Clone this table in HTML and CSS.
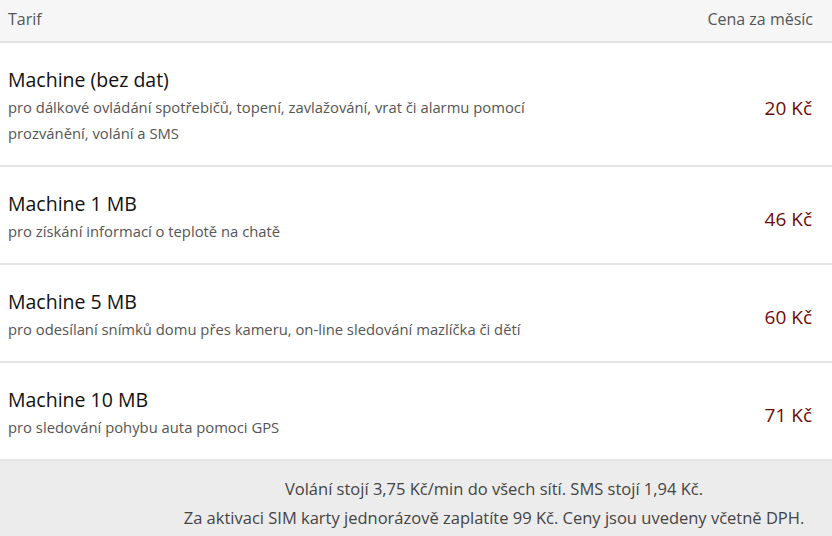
FILE: index.html
```html
<!DOCTYPE html>
<html lang="cs">
<head>
<meta charset="utf-8">
<link rel="stylesheet" href="styles.css">
</head>
<body>
<div class="table">
  <div class="head">
    <span>Tarif</span>
    <span>Cena za měsíc</span>
  </div>
  <div class="row">
    <div class="info">
      <div class="title">Machine (bez dat)</div>
      <div class="desc">pro dálkové ovládání spotřebičů, topení, zavlažování, vrat či alarmu pomocí<br>prozvánění, volání a SMS</div>
    </div>
    <div class="price">20 Kč</div>
  </div>
  <div class="row">
    <div class="info">
      <div class="title">Machine 1 MB</div>
      <div class="desc">pro získání informací o teplotě na chatě</div>
    </div>
    <div class="price">46 Kč</div>
  </div>
  <div class="row">
    <div class="info">
      <div class="title">Machine 5 MB</div>
      <div class="desc">pro odesílaní snímků domu přes kameru, on-line sledování mazlíčka či dětí</div>
    </div>
    <div class="price">60 Kč</div>
  </div>
  <div class="row">
    <div class="info">
      <div class="title">Machine 10 MB</div>
      <div class="desc">pro sledování pohybu auta pomoci GPS</div>
    </div>
    <div class="price">71 Kč</div>
  </div>
  <div class="foot">
    <p>Volání stojí 3,75 Kč/min do všech sítí. SMS stojí 1,94 Kč.</p>
    <p>Za aktivaci SIM karty jednorázově zaplatíte 99 Kč. Ceny jsou uvedeny včetně DPH.</p>
  </div>
</div>
</body>
</html>
```

FILE: styles.css
```css
* { box-sizing: border-box; }
html, body { margin: 0; padding: 0; background: #fff; }
body { font-family: "Open Sans", "Noto Sans", sans-serif; color: #111; width: 832px; height: 536px; overflow: hidden; }
.table { display: flex; flex-direction: column; }
.head {
  display: flex; justify-content: space-between; align-items: center;
  height: 43px; padding: 0 19px 3px 8px;
  background: #f6f6f6; border-bottom: 2px solid #e2e2e2;
  font-size: 16px; color: #555;
}
.row {
  display: flex; justify-content: space-between; align-items: center;
  padding: 23px 20px 19px 8px;
  border-bottom: 2px solid #e4e4e4;
}
.row:last-of-type { border-bottom: 1px solid #e4e4e4; }
.title { font-size: 19.5px; line-height: 28px; color: #111; }
.desc { font-size: 14.8px; line-height: 26px; color: #555; }
.price { font-size: 19px; color: #6e0a0a; padding-top: 4px; }
.foot {
  background: #ececec; height: 78px;
  padding: 13px 0 0 156px; text-align: center;
  font-size: 16.5px; color: #444;
}
.foot p { margin: 0; line-height: 29px; }
```
